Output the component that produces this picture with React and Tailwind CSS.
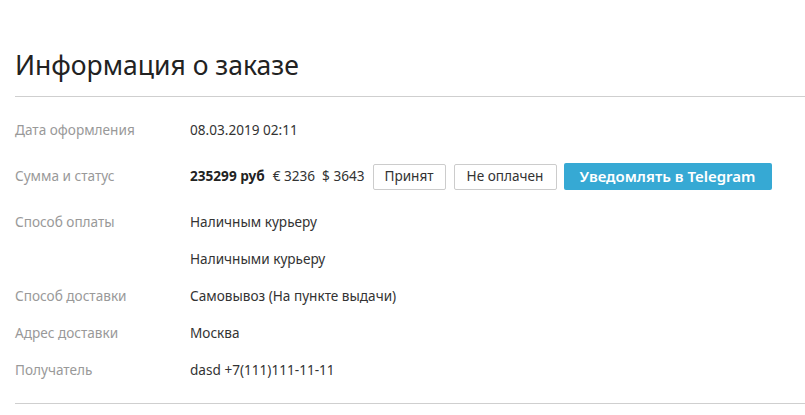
export default function App() {
  const rows = [
    ["Способ оплаты", "Наличным курьеру"],
    ["", "Наличными курьеру"],
    ["Способ доставки", "Самовывоз (На пункте выдачи)"],
    ["Адрес доставки", "Москва"],
    ["Получатель", "dasd +7(111)111-11-11"],
  ];
  return (
    <div className="w-[805px] h-[415px] bg-white pl-[15px] pt-[45px] overflow-hidden" style={{ fontFamily: '"Noto Sans", sans-serif' }}>
      <h1 className="text-[26.5px] leading-[40px] text-[#222] font-normal">Информация о заказе</h1>
      <div className="mt-[11px] border-t border-[#cfcfcf]" />
      <div className="pt-[15px] text-[13.6px]">
        <div className="flex h-[37px] items-center">
          <div className="w-[175px] text-[#999]">Дата оформления</div>
          <div className="text-[#333]">08.03.2019 02:11</div>
        </div>
        <div className="flex h-[55px] items-center">
          <div className="w-[175px] text-[#999]">Сумма и статус</div>
          <div className="flex items-center text-[#333]">
            <span className="font-bold text-[#222]">235299 руб</span>
            <span className="ml-[8px]">€ 3236</span>
            <span className="ml-[7px]">$ 3643</span>
            <button className="ml-[8px] h-[26px] w-[73px] border border-[#ccc] rounded-[2px] bg-white text-[#333]">Принят</button>
            <button className="ml-[8px] h-[26px] w-[103px] border border-[#ccc] rounded-[2px] bg-white text-[#333]">Не оплачен</button>
            <button className="ml-[7px] h-[27px] w-[208px] rounded-[2px] bg-[#36a9d4] text-white text-[15px] font-semibold">Уведомлять в Telegram</button>
          </div>
        </div>
        {rows.map(([l, v], i) => (
          <div key={i} className="flex h-[37px] items-center">
            <div className="w-[175px] text-[#999]">{l}</div>
            <div className="text-[#333]">{v}</div>
          </div>
        ))}
      </div>
      <div className="mt-[14px] border-t border-[#cfcfcf]" />
    </div>
  );
}
